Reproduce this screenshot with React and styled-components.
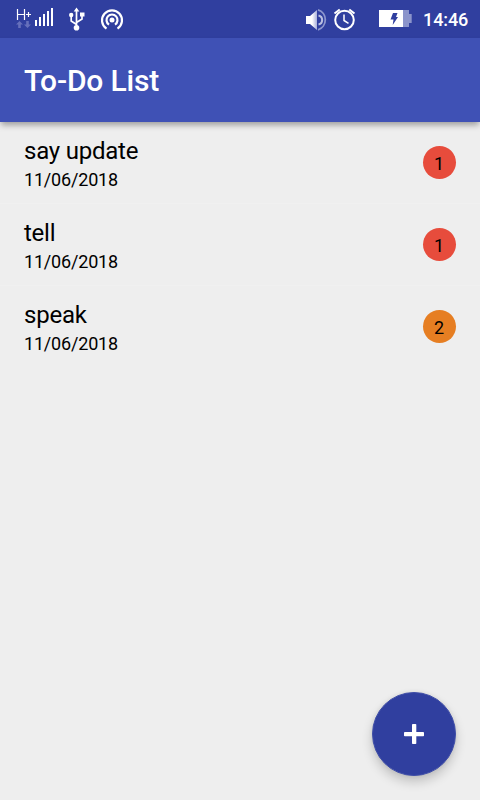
import React from 'react';
import styled, { createGlobalStyle } from 'styled-components';

const Global = createGlobalStyle`
  * { box-sizing: border-box; }
  body { margin: 0; background: #eeeeee; font-family: Roboto, sans-serif; }
`;

const Screen = styled.div`
  position: relative;
  display: flex;
  flex-direction: column;
  height: 800px;
  width: 480px;
  overflow: hidden;
  background: #eeeeee;
`;

const StatusBar = styled.header`
  display: flex;
  flex: none;
  height: 38px;
  justify-content: space-between;
  background: #303f9f;
  color: #fff;
`;

const StatusGroup = styled.div`
  display: flex;
  svg { display: block; flex: none; }
`;

const Clock = styled.time`
  width: 57px;
  font-size: 18px;
  font-weight: 500;
  letter-spacing: -0.1px;
  line-height: 40px;
  white-space: nowrap;
`;

const AppBar = styled.div`
  display: flex;
  flex: none;
  align-items: center;
  height: 84px;
  padding: 2px 24px 0;
  background: #3f51b5;
  box-shadow: 0 4px 6px -1px rgba(0, 0, 0, 0.34);
  z-index: 1;
`;

const Title = styled.h1`
  margin: 0;
  color: #fff;
  font-size: 30px;
  font-weight: 500;
  letter-spacing: -0.18px;
  line-height: 36px;
`;

const TaskList = styled.ul`
  margin: 0;
  padding: 0;
  list-style: none;
`;

const TaskRow = styled.li`
  display: flex;
  justify-content: space-between;
  height: 82px;
  padding: 15px 24px 0;
  border-bottom: 1px solid #f0f0f0;
  &:last-child { border-bottom-color: transparent; }
`;

const TaskName = styled.div`
  font-size: 24px;
  line-height: 28px;
  letter-spacing: -0.23px;
  color: #000;
`;

const TaskDate = styled.div`
  margin-top: 4px;
  font-size: 18px;
  line-height: 22px;
  letter-spacing: -0.18px;
  color: #000;
`;

const Priority = styled.span`
  display: flex;
  align-items: center;
  justify-content: center;
  width: 33px;
  height: 33px;
  margin-top: 9px;
  padding: 2px 1px 0 0;
  border-radius: 50%;
  background: ${(p) => (p.$level === 1 ? '#e74c3c' : '#e67e22')};
  color: #000;
  font-size: 18px;
`;

const AddButton = styled.button`
  position: absolute;
  right: 24px;
  bottom: 24px;
  display: flex;
  align-items: center;
  justify-content: center;
  width: 84px;
  height: 84px;
  padding: 0;
  border: 1px solid #3f4ea8;
  border-radius: 50%;
  background: #303f9f;
  box-shadow: 0 6px 11px rgba(0, 0, 0, 0.19), 0 0 4px rgba(0, 0, 0, 0.08);
`;

const tasks = [
  { name: 'say update', date: '11/06/2018', level: 1 },
  { name: 'tell', date: '11/06/2018', level: 1 },
  { name: 'speak', date: '11/06/2018', level: 2 },
];

const LeftIcons = () => (
  <svg width="140" height="38" viewBox="0 0 140 38" fill="none" stroke="#fff">
    <path d="M17.500 9v11M24.500 9v11M17.500 14.500h7M26 14.500h5M28.500 12v5" strokeWidth="1.200" />
    <path d="M19.500 21l3.500 3.500h-2.200V28h-2.600v-3.500H16zM27.500 28l3.500-3.500h-2.200V21h-2.600v3.500H24z" fill="#6670bb" stroke="none" />
    <path d="M35 20h2v6h-2zM39 17h2v9h-2zM43 14h2v12h-2zM47 11h2v15h-2zM51 8h2v18h-2z" fill="#fff" stroke="none" />
    <g strokeWidth="1.700">
      <path d="M76.500 28V11M76.500 24.500l-5.300-3.500v-5M76.500 22.500l5.500-3.500V14" />
      <path d="M76.500 7.500l2.800 4h-5.600zM80 12.500h4.500v4H80z" fill="#fff" stroke="none" />
      <circle cx="71.200" cy="15" r="2.200" fill="#fff" stroke="none" />
      <circle cx="76.500" cy="27.800" r="2.800" fill="#fff" stroke="none" />
    </g>
    <circle cx="112" cy="20" r="2.500" fill="#fff" stroke="none" />
    <path d="M106.500 28.700a10 10 0 1 1 11 0M109 24.600a5.500 5.500 0 1 1 6 0" strokeWidth="2.200" />
  </svg>
);

const RightIcons = () => (
  <svg width="118" height="38" viewBox="305 0 118 38" fill="none" stroke="#fff">
    <defs>
      <linearGradient id="speaker" x1="0" x2="1" y1="0" y2="0">
        <stop offset="0.550" stopColor="#fff" />
        <stop offset="1" stopColor="#a9b0da" />
      </linearGradient>
    </defs>
    <path d="M306 16h4l7-6v20l-7-6h-4z" fill="url(#speaker)" stroke="none" />
    <path d="M318.500 15.500a4.600 4.600 0 0 1 0 9" stroke="#b9bfe1" strokeWidth="2" />
    <path d="M318 9.800a10.500 10.500 0 0 1 0 20" stroke="#8e97ce" strokeWidth="1.800" />
    <circle cx="344.500" cy="20" r="9.300" strokeWidth="2" />
    <path d="M344 14.500v6l4.500 2.800" strokeWidth="1.500" />
    <path d="M334.500 13.500l5.200-4M354.500 13.500l-5.200-4" strokeWidth="2" />
    <path d="M379 10h24v17h-24z" fill="#fff" stroke="none" />
    <path d="M403 10h6v4h2.700v9H409v4h-6z" fill="#8b94cb" stroke="none" />
    <path d="M393 13h4.500l-1.500 4h2l-5.300 8 .8-5.500h-3z" fill="#303f9f" stroke="none" />
  </svg>
);

export default function App() {
  return (
    <>
      <Global />
      <Screen>
        <StatusBar>
          <StatusGroup><LeftIcons /></StatusGroup>
          <StatusGroup>
            <RightIcons />
            <Clock>14:46</Clock>
          </StatusGroup>
        </StatusBar>
        <AppBar><Title>To-Do List</Title></AppBar>
        <TaskList>
          {tasks.map((task) => (
            <TaskRow key={task.name}>
              <div>
                <TaskName>{task.name}</TaskName>
                <TaskDate>{task.date}</TaskDate>
              </div>
              <Priority $level={task.level}>{task.level}</Priority>
            </TaskRow>
          ))}
        </TaskList>
        <AddButton aria-label="Add task">
          <svg width="20" height="20" viewBox="0 0 20 20" fill="#fff">
            <rect x="8" y="0" width="4.300" height="20" rx="0.800" />
            <rect x="0" y="8" width="20" height="4.300" rx="0.800" />
          </svg>
        </AddButton>
      </Screen>
    </>
  );
}
